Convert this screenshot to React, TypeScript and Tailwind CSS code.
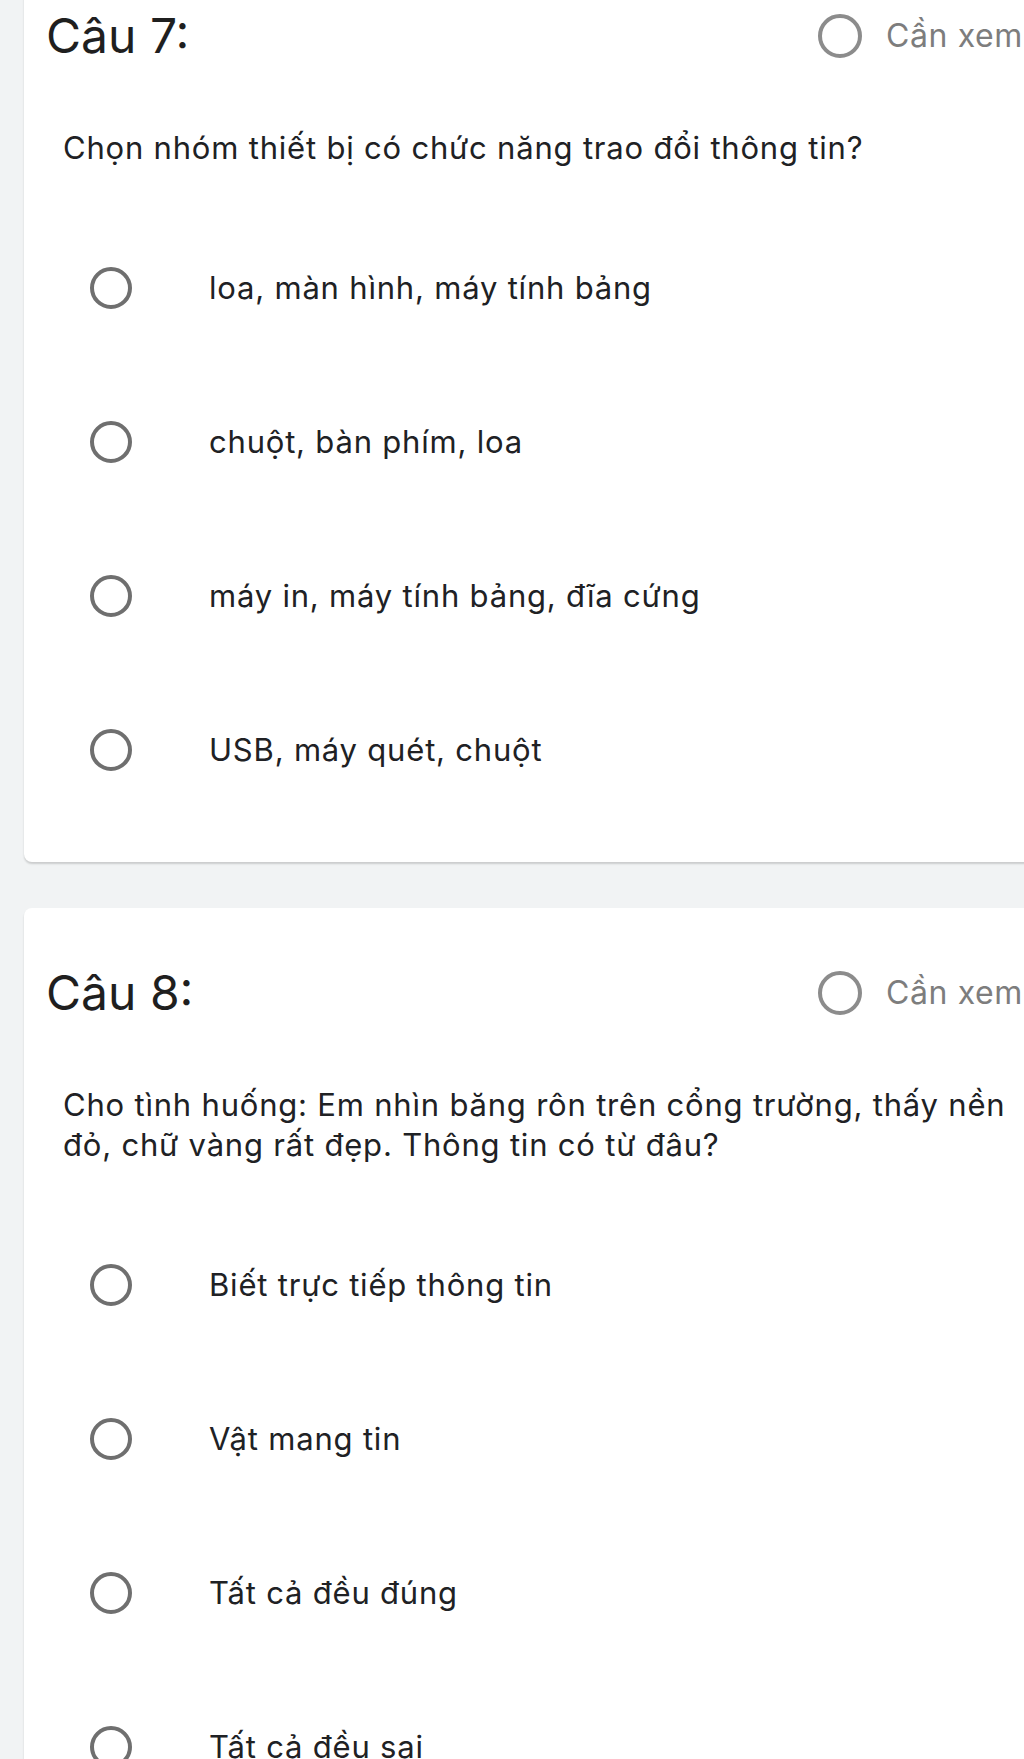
import React from 'react';

interface Question {
  label: string;
  lines: string[];
  options: string[];
}

const questions: Question[] = [
  {
    label: 'Câu 7:',
    lines: ['Chọn nhóm thiết bị có chức năng trao đổi thông tin?'],
    options: [
      'loa, màn hình, máy tính bảng',
      'chuột, bàn phím, loa',
      'máy in, máy tính bảng, đĩa cứng',
      'USB, máy quét, chuột',
    ],
  },
  {
    label: 'Câu 8:',
    lines: [
      'Cho tình huống: Em nhìn băng rôn trên cổng trường, thấy nền',
      'đỏ, chữ vàng rất đẹp. Thông tin có từ đâu?',
    ],
    options: ['Biết trực tiếp thông tin', 'Vật mang tin', 'Tất cả đều đúng', 'Tất cả đều sai'],
  },
];

const QuestionCard: React.FC<{ q: Question }> = ({ q }) => {
  return (
    <div className="rounded-lg bg-white shadow-[0_2px_2px_rgba(0,0,0,0.16)] pt-[57px] pb-[90px]">
      {/* header: question number + "need review" toggle */}
      <div className="flex items-center h-[56px] pl-[22px]">
        <div className="w-[772px] text-[48px] leading-[56px] text-[#1f1f1f]">{q.label}</div>
        <div className="flex items-center">
          <span className="w-[44px] h-[44px] rounded-full border-4 border-[#8c8c8c]" />
          <span className="ml-[24px] text-[32px] tracking-[0.6px] text-[#7d7d7d] whitespace-nowrap">Cần xem</span>
        </div>
      </div>

      <div className="mt-[64px] pl-[39px] text-[31px] tracking-[0.8px] leading-[40px] text-[#202124] whitespace-nowrap">
        {q.lines.map((line, i) => (
          <div key={i}>{line}</div>
        ))}
      </div>

      <div className="mt-[98px] flex flex-col gap-[110px] pl-[66px]">
        {q.options.map((opt) => (
          <div key={opt} className="flex items-center h-[44px]">
            <span className="w-[42px] h-[42px] shrink-0 rounded-full border-4 border-[#6f6f6f]" />
            <span className="ml-[77px] text-[31px] tracking-[0.8px] text-[#202124] whitespace-nowrap">{opt}</span>
          </div>
        ))}
      </div>
    </div>
  );
};

export default function App() {
  return (
    <div
      className="w-[1024px] h-[1759px] overflow-hidden bg-[#f1f3f4]"
      style={{ fontFamily: 'Inter, "Noto Sans", sans-serif' }}
    >
      <div className="w-[1100px] pl-6 -mt-[49px] flex flex-col gap-[46px]">
        {questions.map((q) => (
          <QuestionCard key={q.label} q={q} />
        ))}
      </div>
    </div>
  );
}
